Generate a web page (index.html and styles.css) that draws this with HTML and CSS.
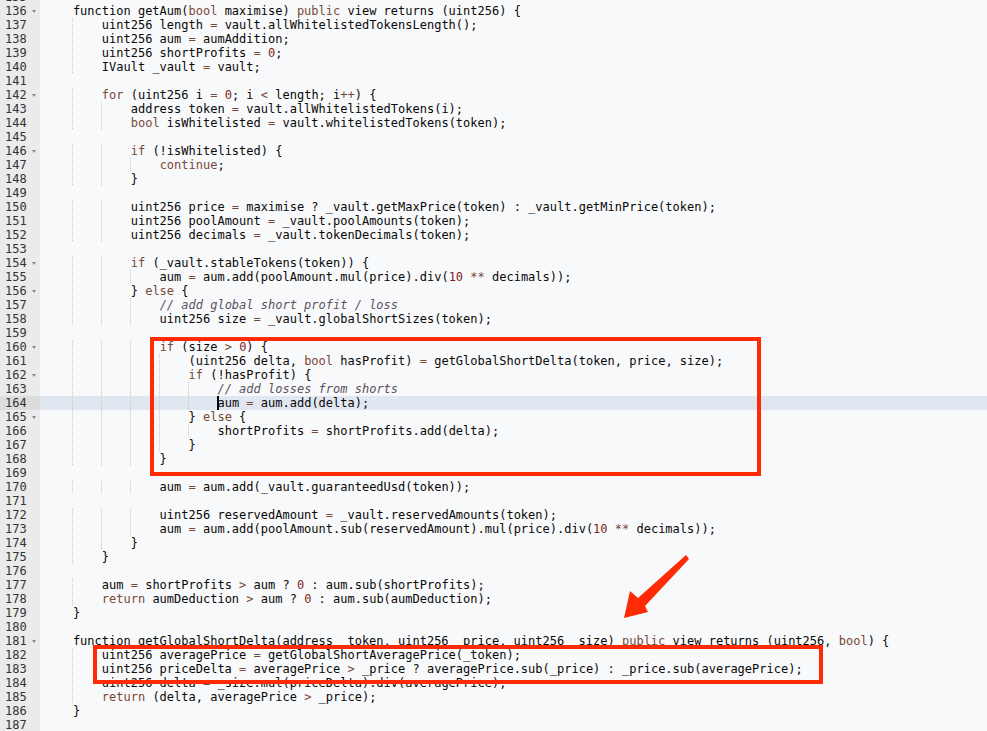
FILE: index.html
```html
<!DOCTYPE html>
<html lang="en">
<head>
<meta charset="utf-8">
<title>Vault getAum</title>
<link rel="stylesheet" href="styles.css">
</head>
<body>
<div class="editor">
<div class="row"><span class="num">135</span><span class="src"></span></div>
<div class="row"><span class="num">136<i class="fold"></i></span><span class="src">    function getAum(<span class="k">bool</span> maximise) <span class="k">public</span> view returns (uint256) {</span></div>
<div class="row"><span class="num">137</span><span class="src"><span class="g">    </span>    uint256 length <span class="k">=</span> vault.allWhitelistedTokensLength();</span></div>
<div class="row"><span class="num">138</span><span class="src"><span class="g">    </span>    uint256 aum <span class="k">=</span> aumAddition;</span></div>
<div class="row"><span class="num">139</span><span class="src"><span class="g">    </span>    uint256 shortProfits <span class="k">=</span> <span class="n">0</span>;</span></div>
<div class="row"><span class="num">140</span><span class="src"><span class="g">    </span>    IVault _vault <span class="k">=</span> vault;</span></div>
<div class="row"><span class="num">141</span><span class="src"></span></div>
<div class="row"><span class="num">142<i class="fold"></i></span><span class="src"><span class="g">    </span>    <span class="k">for</span> (uint256 i <span class="k">=</span> <span class="n">0</span>; i <span class="k">&lt;</span> length; i<span class="k">++</span>) {</span></div>
<div class="row"><span class="num">143</span><span class="src"><span class="g">    </span><span class="g">    </span>    address token <span class="k">=</span> vault.allWhitelistedTokens(i);</span></div>
<div class="row"><span class="num">144</span><span class="src"><span class="g">    </span><span class="g">    </span>    <span class="k">bool</span> isWhitelisted <span class="k">=</span> vault.whitelistedTokens(token);</span></div>
<div class="row"><span class="num">145</span><span class="src"></span></div>
<div class="row"><span class="num">146<i class="fold"></i></span><span class="src"><span class="g">    </span><span class="g">    </span>    <span class="k">if</span> (!isWhitelisted) {</span></div>
<div class="row"><span class="num">147</span><span class="src"><span class="g">    </span><span class="g">    </span><span class="g">    </span>    <span class="k">continue</span>;</span></div>
<div class="row"><span class="num">148</span><span class="src"><span class="g">    </span><span class="g">    </span>    }</span></div>
<div class="row"><span class="num">149</span><span class="src"></span></div>
<div class="row"><span class="num">150</span><span class="src"><span class="g">    </span><span class="g">    </span>    uint256 price <span class="k">=</span> maximise ? _vault.getMaxPrice(token) : _vault.getMinPrice(token);</span></div>
<div class="row"><span class="num">151</span><span class="src"><span class="g">    </span><span class="g">    </span>    uint256 poolAmount <span class="k">=</span> _vault.poolAmounts(token);</span></div>
<div class="row"><span class="num">152</span><span class="src"><span class="g">    </span><span class="g">    </span>    uint256 decimals <span class="k">=</span> _vault.tokenDecimals(token);</span></div>
<div class="row"><span class="num">153</span><span class="src"></span></div>
<div class="row"><span class="num">154<i class="fold"></i></span><span class="src"><span class="g">    </span><span class="g">    </span>    <span class="k">if</span> (_vault.stableTokens(token)) {</span></div>
<div class="row"><span class="num">155</span><span class="src"><span class="g">    </span><span class="g">    </span><span class="g">    </span>    aum <span class="k">=</span> aum.add(poolAmount.mul(price).div(<span class="n">10</span> <span class="k">**</span> decimals));</span></div>
<div class="row"><span class="num">156<i class="fold"></i></span><span class="src"><span class="g">    </span><span class="g">    </span>    } <span class="k">else</span> {</span></div>
<div class="row"><span class="num">157</span><span class="src"><span class="g">    </span><span class="g">    </span><span class="g">    </span>    <span class="c">// add global short profit / loss</span></span></div>
<div class="row"><span class="num">158</span><span class="src"><span class="g">    </span><span class="g">    </span><span class="g">    </span>    uint256 size <span class="k">=</span> _vault.globalShortSizes(token);</span></div>
<div class="row"><span class="num">159</span><span class="src"></span></div>
<div class="row"><span class="num">160<i class="fold"></i></span><span class="src"><span class="g">    </span><span class="g">    </span><span class="g">    </span>    <span class="k">if</span> (size <span class="k">&gt;</span> <span class="n">0</span>) {</span></div>
<div class="row"><span class="num">161</span><span class="src"><span class="g">    </span><span class="g">    </span><span class="g">    </span><span class="g">    </span>    (uint256 delta, <span class="k">bool</span> hasProfit) <span class="k">=</span> getGlobalShortDelta(token, price, size);</span></div>
<div class="row"><span class="num">162<i class="fold"></i></span><span class="src"><span class="g">    </span><span class="g">    </span><span class="g">    </span><span class="g">    </span>    <span class="k">if</span> (!hasProfit) {</span></div>
<div class="row"><span class="num">163</span><span class="src"><span class="g">    </span><span class="g">    </span><span class="g">    </span><span class="g">    </span><span class="g">    </span>    <span class="c">// add losses from shorts</span></span></div>
<div class="row active"><span class="num">164</span><span class="src"><span class="g">    </span><span class="g">    </span><span class="g">    </span><span class="g">    </span><span class="g">    </span>    <span class="cur"></span>aum <span class="k">=</span> aum.add(delta);</span></div>
<div class="row"><span class="num">165<i class="fold"></i></span><span class="src"><span class="g">    </span><span class="g">    </span><span class="g">    </span><span class="g">    </span>    } <span class="k">else</span> {</span></div>
<div class="row"><span class="num">166</span><span class="src"><span class="g">    </span><span class="g">    </span><span class="g">    </span><span class="g">    </span><span class="g">    </span>    shortProfits <span class="k">=</span> shortProfits.add(delta);</span></div>
<div class="row"><span class="num">167</span><span class="src"><span class="g">    </span><span class="g">    </span><span class="g">    </span><span class="g">    </span>    }</span></div>
<div class="row"><span class="num">168</span><span class="src"><span class="g">    </span><span class="g">    </span><span class="g">    </span>    }</span></div>
<div class="row"><span class="num">169</span><span class="src"></span></div>
<div class="row"><span class="num">170</span><span class="src"><span class="g">    </span><span class="g">    </span><span class="g">    </span>    aum <span class="k">=</span> aum.add(_vault.guaranteedUsd(token));</span></div>
<div class="row"><span class="num">171</span><span class="src"></span></div>
<div class="row"><span class="num">172</span><span class="src"><span class="g">    </span><span class="g">    </span><span class="g">    </span>    uint256 reservedAmount <span class="k">=</span> _vault.reservedAmounts(token);</span></div>
<div class="row"><span class="num">173</span><span class="src"><span class="g">    </span><span class="g">    </span><span class="g">    </span>    aum <span class="k">=</span> aum.add(poolAmount.sub(reservedAmount).mul(price).div(<span class="n">10</span> <span class="k">**</span> decimals));</span></div>
<div class="row"><span class="num">174</span><span class="src"><span class="g">    </span><span class="g">    </span>    }</span></div>
<div class="row"><span class="num">175</span><span class="src"><span class="g">    </span>    }</span></div>
<div class="row"><span class="num">176</span><span class="src"></span></div>
<div class="row"><span class="num">177</span><span class="src"><span class="g">    </span>    aum <span class="k">=</span> shortProfits <span class="k">&gt;</span> aum ? <span class="n">0</span> : aum.sub(shortProfits);</span></div>
<div class="row"><span class="num">178</span><span class="src"><span class="g">    </span>    <span class="k">return</span> aumDeduction <span class="k">&gt;</span> aum ? <span class="n">0</span> : aum.sub(aumDeduction);</span></div>
<div class="row"><span class="num">179</span><span class="src">    }</span></div>
<div class="row"><span class="num">180</span><span class="src"></span></div>
<div class="row"><span class="num">181<i class="fold"></i></span><span class="src">    function getGlobalShortDelta(address _token, uint256 _price, uint256 _size) <span class="k">public</span> view returns (uint256, <span class="k">bool</span>) {</span></div>
<div class="row"><span class="num">182</span><span class="src"><span class="g">    </span>    uint256 averagePrice <span class="k">=</span> getGlobalShortAveragePrice(_token);</span></div>
<div class="row"><span class="num">183</span><span class="src"><span class="g">    </span>    uint256 priceDelta <span class="k">=</span> averagePrice <span class="k">&gt;</span> _price ? averagePrice.sub(_price) : _price.sub(averagePrice);</span></div>
<div class="row"><span class="num">184</span><span class="src"><span class="g">    </span>    uint256 delta <span class="k">=</span> _size.mul(priceDelta).div(averagePrice);</span></div>
<div class="row"><span class="num">185</span><span class="src"><span class="g">    </span>    <span class="k">return</span> (delta, averagePrice <span class="k">&gt;</span> _price);</span></div>
<div class="row"><span class="num">186</span><span class="src">    }</span></div>
<div class="row"><span class="num">187</span><span class="src"></span></div>
</div>
<div class="mark mark-a"></div>
<div class="mark mark-b"></div>
<svg class="arrow" width="987" height="731" viewBox="0 0 987 731" aria-hidden="true">
  <polygon points="624,618 630,591 638,598 686,555 689,559 645,606 648,612" fill="#ff2a06"/>
</svg>
</body>
</html>
```

FILE: styles.css
```css
html, body {
  margin: 0;
  padding: 0;
  height: 731px;
  overflow: hidden;
  background: #f8f9fa;
}

.editor {
  margin-top: -10px;
  font-family: "DejaVu Sans Mono", "Liberation Mono", monospace;
  font-size: 12px;
  line-height: 14px;
  color: #080808;
}

.row {
  display: grid;
  grid-template-columns: 40px 1fr;
  height: 14px;
}

.num {
  position: relative;
  background: #ebebeb;
  color: #333333;
  padding-left: 5px;
}

.fold {
  position: absolute;
  right: 4px;
  top: 6px;
  width: 0;
  height: 0;
  border-left: 2.5px solid transparent;
  border-right: 2.5px solid transparent;
  border-top: 3px solid #8a8a8a;
}

.src {
  padding-left: 4px;
  white-space: pre;
}

.row.active .num {
  background: #dcdcdc;
}

.row.active .src {
  background: #e1e7f1;
}

.g {
  background-image: linear-gradient(#cfc8b9 50%, transparent 50%);
  background-size: 1px 2px;
  background-repeat: repeat-y;
  background-position: right top;
}

.k {
  color: #794938;
}

.n {
  color: #811f24;
}

.c {
  color: #5a525f;
  font-style: italic;
}

.cur {
  display: inline-block;
  width: 0;
  height: 14px;
  vertical-align: top;
  border-left: 2px solid #000;
  margin-right: -2px;
}

.mark {
  position: absolute;
  box-sizing: border-box;
  border: 4px solid #ff2a06;
}

.mark-a {
  left: 150px;
  top: 337px;
  width: 611px;
  height: 139px;
}

.mark-b {
  left: 93px;
  top: 645px;
  width: 730px;
  height: 39px;
}

.arrow {
  position: absolute;
  left: 0;
  top: 0;
  pointer-events: none;
}
```
